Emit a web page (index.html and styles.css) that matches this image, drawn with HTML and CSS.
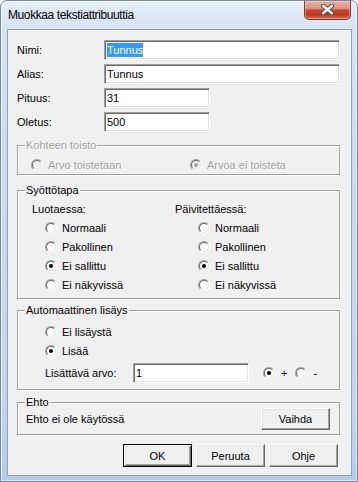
FILE: index.html
```html
<!DOCTYPE html>
<html lang="fi">
<head>
<meta charset="utf-8">
<title>Muokkaa tekstiattribuuttia</title>
<link rel="stylesheet" href="styles.css">
</head>
<body>
<div class="window">
  <div class="titlebar">
    <span class="title">Muokkaa tekstiattribuuttia</span>
    <div class="close" aria-label="Sulje">
      <svg width="13" height="11" viewBox="0 0 13 11">
        <path d="M2 1.8 L11 9.2 M11 1.8 L2 9.2" stroke="#4a4a4a" stroke-width="4.4" stroke-linecap="round" fill="none"/>
        <path d="M2 1.8 L11 9.2 M11 1.8 L2 9.2" stroke="#ffffff" stroke-width="2.4" stroke-linecap="round" fill="none"/>
      </svg>
    </div>
  </div>
  <div class="client">
    <div class="fields">
      <div class="frow"><span class="flabel">Nimi:</span><div class="field wide"><span class="sel">Tunnus</span></div></div>
      <div class="frow"><span class="flabel">Alias:</span><div class="field wide">Tunnus</div></div>
      <div class="frow"><span class="flabel">Pituus:</span><div class="field short">31</div></div>
      <div class="frow"><span class="flabel">Oletus:</span><div class="field short">500</div></div>
    </div>

    <div class="group g1 disabled">
      <span class="legend">Kohteen toisto</span>
      <div class="pair">
        <div class="opt"><span class="radio"><span class="ring"></span></span>Arvo toistetaan</div>
        <div class="opt"><span class="radio"><span class="ring"><span class="dot"></span></span></span>Arvoa ei toisteta</div>
      </div>
    </div>

    <div class="group g2">
      <span class="legend">Syöttötapa</span>
      <div class="cols">
        <div class="col c1">
          <div class="head">Luotaessa:</div>
          <div class="list">
            <div class="opt"><span class="radio"><span class="ring"></span></span>Normaali</div>
            <div class="opt"><span class="radio"><span class="ring"></span></span>Pakollinen</div>
            <div class="opt"><span class="radio"><span class="ring"><span class="dot"></span></span></span>Ei sallittu</div>
            <div class="opt"><span class="radio"><span class="ring"></span></span>Ei näkyvissä</div>
          </div>
        </div>
        <div class="col c2">
          <div class="head">Päivitettäessä:</div>
          <div class="list">
            <div class="opt"><span class="radio"><span class="ring"></span></span>Normaali</div>
            <div class="opt"><span class="radio"><span class="ring"></span></span>Pakollinen</div>
            <div class="opt"><span class="radio"><span class="ring"><span class="dot"></span></span></span>Ei sallittu</div>
            <div class="opt"><span class="radio"><span class="ring"></span></span>Ei näkyvissä</div>
          </div>
        </div>
      </div>
    </div>

    <div class="group g3">
      <span class="legend">Automaattinen lisäys</span>
      <div class="list">
        <div class="opt"><span class="radio"><span class="ring"></span></span>Ei lisäystä</div>
        <div class="opt"><span class="radio"><span class="ring"><span class="dot"></span></span></span>Lisää</div>
      </div>
      <div class="addrow">
        <span class="alabel">Lisättävä arvo:</span>
        <div class="field add">1</div>
        <span class="radio plus"><span class="ring"><span class="dot"></span></span></span>
        <span class="sign">+</span>
        <span class="radio minus"><span class="ring"></span></span>
        <span class="sign">-</span>
      </div>
    </div>

    <div class="group g4">
      <span class="legend">Ehto</span>
      <div class="cond">
        <span>Ehto ei ole käytössä</span>
        <button class="btn vaihda">Vaihda</button>
      </div>
    </div>

    <div class="buttons">
      <button class="btn default">OK</button>
      <button class="btn">Peruuta</button>
      <button class="btn">Ohje</button>
    </div>
  </div>
</div>
</body>
</html>
```
FILE: styles.css
```css
* { box-sizing: border-box; }
html, body { margin: 0; padding: 0; background: #ffffff; }
body {
  width: 358px;
  height: 482px;
  overflow: hidden;
  font-family: "Liberation Sans", Arial, sans-serif;
  font-size: 11px;
  color: #000;
}

.window {
  width: 358px;
  height: 482px;
  border: 1px solid #6f88a8;
  border-radius: 7px 7px 0 0;
  background: linear-gradient(180deg, #e6eef8 0px, #d6e3f3 28px, #cadbef 160px, #c0d5ed 420px, #b2cbe8 482px);
  box-shadow: inset 1px 1px 0 rgba(255,255,255,0.75), inset -1px -1px 0 rgba(255,255,255,0.5);
  display: flex;
  flex-direction: column;
  padding: 0 5px 5px 6px;
}

.titlebar {
  height: 28px;
  display: flex;
  align-items: center;
  justify-content: space-between;
}
.title {
  padding-left: 1px;
  font-size: 12px;
  letter-spacing: -0.4px;
  color: #000;
}
.close {
  align-self: flex-start;
  width: 47px;
  height: 19px;
  margin-right: 1px;
  border: 1px solid #7b3a30;
  border-top: none;
  border-radius: 0 0 5px 5px;
  background: linear-gradient(180deg, #eab1a4 0%, #de8f7e 42%, #c9492f 50%, #b93a20 75%, #d56a4d 100%);
  box-shadow: inset 0 0 0 1px rgba(255,210,200,0.45);
  display: flex;
  align-items: center;
  justify-content: center;
}
.close svg { display: block; margin-top: -1px; }

.client {
  width: 345px;
  border: 1px solid #8ca1bd;
  background: #f0f0f0;
  padding: 10px 11px 8px 9px;
  display: flex;
  flex-direction: column;
}

.fields { display: flex; flex-direction: column; gap: 4px; }
.frow { display: flex; align-items: center; height: 20px; }
.flabel { width: 87px; }

.field {
  height: 20px;
  background: #fff;
  border: 1px solid;
  border-color: #a0a0a0 #fff #fff #a0a0a0;
  box-shadow: inset 1px 1px 0 #696969, inset -1px -1px 0 #e3e3e3;
  padding: 0 0 0 2px;
  line-height: 18px;
  white-space: nowrap;
}
.field.wide { flex: 1; }
.field.short { width: 106px; }
.sel { background: #3399ff; color: #fff; padding: 1px 0; }

.group {
  position: relative;
  border: 1px solid #a0a0a0;
  box-shadow: inset 1px 1px 0 #fff, 1px 1px 0 #fff;
}
.legend {
  position: absolute;
  top: -7px;
  left: 7px;
  padding: 0 1px;
  line-height: 13px;
  background: #f0f0f0;
}

.opt { display: flex; align-items: center; gap: 5px; height: 19px; }

.radio {
  width: 12px;
  height: 12px;
  flex: none;
  display: inline-flex;
  border: 1px solid;
  border-color: #a0a0a0 #fff #fff #a0a0a0;
  border-radius: 50%;
}
.ring {
  flex: 1;
  display: flex;
  align-items: center;
  justify-content: center;
  border: 1px solid;
  border-color: #696969 #e3e3e3 #e3e3e3 #696969;
  border-radius: 50%;
  background: #fff;
}
.dot { width: 4px; height: 4px; border-radius: 50%; background: #000; }

.disabled { color: #a0a0a0; }
.disabled .legend, .disabled .opt { text-shadow: 1px 1px 0 #fff; }
.disabled .ring { background: #f0f0f0; }
.disabled .dot { background: #a0a0a0; }

.g1 { margin-top: 13px; height: 30px; padding: 9px 0 0 13px; }
.pair { display: grid; grid-template-columns: 159px 1fr; }

.g2 { margin-top: 15px; height: 109px; padding: 11px 0 0 14px; }
.cols { display: grid; grid-template-columns: 143px 1fr; }
.head { line-height: 14px; height: 14px; margin-bottom: 2px; }
.c1 .list { padding-left: 13px; }
.c2 .list { padding-left: 23px; }

.g3 { margin-top: 11px; height: 80px; padding: 11px 0 0 27px; }
.addrow { display: flex; align-items: center; height: 20px; margin-top: 3px; }
.alabel { width: 88px; }
.field.add { width: 116px; }
.radio.plus { margin-left: 14px; }
.radio.minus { margin-left: 8px; }
.sign { margin-left: 6px; }

.g4 { margin-top: 12px; height: 33px; }
.cond {
  height: 100%;
  display: flex;
  align-items: center;
  justify-content: space-between;
  padding: 0 9px 0 8px;
}

.btn {
  width: 69px;
  height: 23px;
  padding: 0;
  font-family: inherit;
  font-size: 11px;
  color: #000;
  background: #f0f0f0;
  border: 1px solid;
  border-color: #fff #696969 #696969 #fff;
  box-shadow: inset -1px -1px 0 #a0a0a0, inset 1px 1px 0 #e3e3e3;
  display: flex;
  align-items: center;
  justify-content: center;
}
.btn.vaihda { height: 22px; }
.btn.default {
  border-color: #000;
  box-shadow: inset 1px 1px 0 #fff, inset -1px -1px 0 #696969, inset 2px 2px 0 #e3e3e3, inset -2px -2px 0 #a0a0a0;
}

.buttons {
  margin-top: 9px;
  display: flex;
  justify-content: flex-end;
  gap: 4px;
  padding-right: 2px;
}
```
